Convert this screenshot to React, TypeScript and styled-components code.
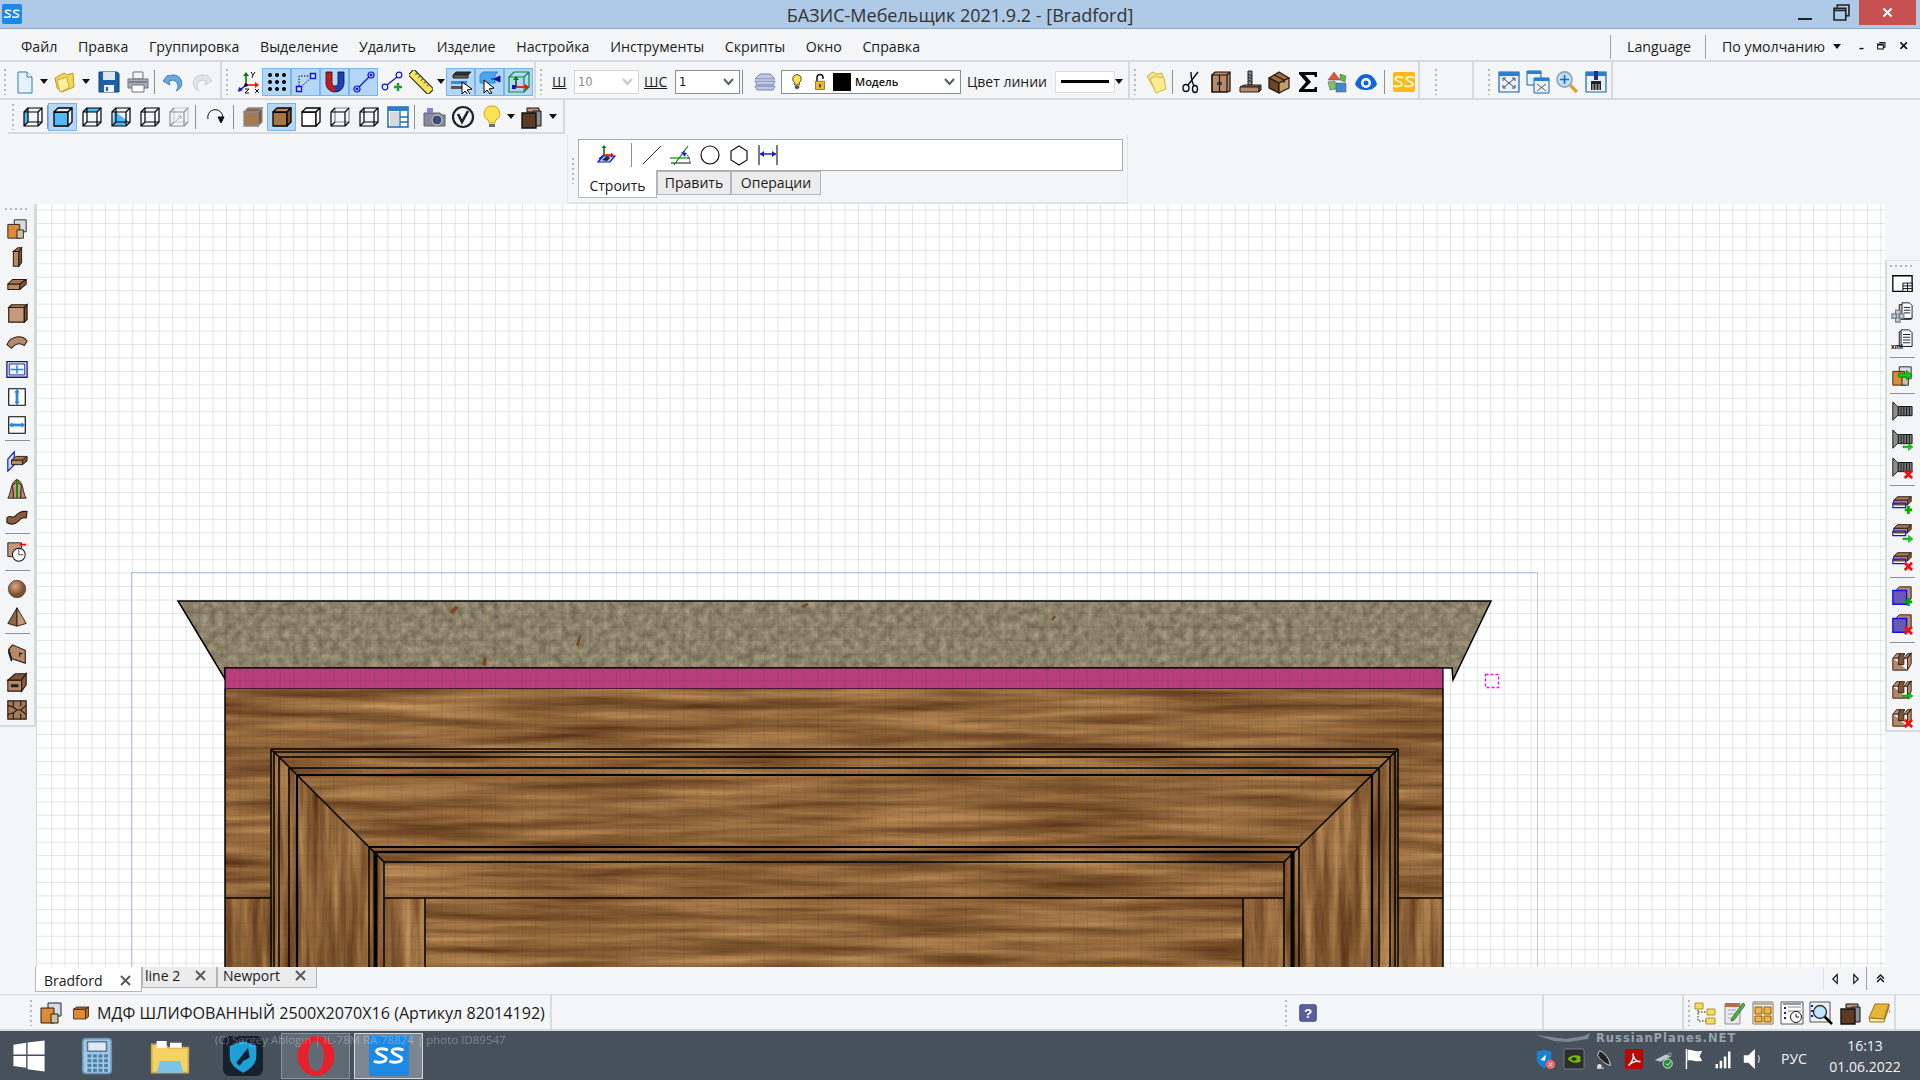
import React from "react";
import styled, { createGlobalStyle } from "styled-components";

const Global = createGlobalStyle`
  html, body { margin: 0; padding: 0; background: #f4f5f7; overflow: hidden; }
  #root { width: 1920px; height: 1080px; }
`;

const UI = `"Open Sans", "Noto Sans", sans-serif`;

const Page = styled.div`
  width: 1920px; height: 1080px; display: flex; flex-direction: column;
  background: #f4f5f7; font-family: ${UI}; color: #1b1b1b; position: relative; overflow: hidden;
`;

/* ---------- window title ---------- */
const TitleBar = styled.div`
  height: 28px; flex: none; background: #afcae6; border-bottom: 1px solid #8fa9c2;
  display: flex; align-items: flex-start; position: relative;
`;
const AppLogo = styled.div`
  width: 20px; height: 20px; margin: 4px 0 0 2px; border-radius: 2px; background: #1e88e5;
  display: flex; align-items: center; justify-content: center;
`;
const TitleText = styled.div`
  flex: 1; text-align: center; font-size: 18px; line-height: 30px; color: #333; margin-left: -22px;
`;
const WinButtons = styled.div`
  position: absolute; right: 4px; top: 0; display: flex; align-items: flex-start;
`;
const WinBtn = styled.div<{ $w: number; $close?: boolean }>`
  width: ${(p) => p.$w}px; height: 25px; display: flex; align-items: center; justify-content: center;
  background: ${(p) => (p.$close ? "#c75050" : "transparent")};
`;

/* ---------- menu ---------- */
const MenuBar = styled.div`
  height: 33px; flex: none; display: flex; align-items: center; border-bottom: 2px solid #d8dadd; box-sizing: border-box;
  padding: 4px 0 0 21px; font-size: 14.2px; position: relative;
`;
const MenuItem = styled.span`
  margin-right: 20.7px; white-space: nowrap; line-height: 20px;
`;
const MenuRight = styled.div`
  margin-left: auto; display: flex; align-items: center; height: 100%;
`;
const MenuSep = styled.div<{ $r: number }>`
  width: 1px; height: 24px; background: #9da1a6; margin-right: ${(p) => p.$r}px;
`;
const MenuRightItem = styled.span<{ $w: number }>`
  width: ${(p) => p.$w}px; white-space: nowrap;
`;
const SmallGlyph = styled.div<{ $w: number }>`
  width: ${(p) => p.$w}px; flex: none; display: flex; justify-content: center; align-items: center;
`;

/* ---------- toolbars ---------- */
const ToolRow = styled.div<{ $h: number }>`
  height: ${(p) => p.$h}px; flex: none; display: flex; align-items: stretch; box-sizing: border-box;
  border-bottom: 2px solid #d8dadd;
`;
const ToolRowPlain = styled(ToolRow)`
  border-bottom: none;
`;
const Bar = styled.div<{ $w: number; $ml?: number }>`
  width: ${(p) => p.$w}px; margin-left: ${(p) => p.$ml ?? 0}px; box-sizing: border-box; display: flex; align-items: center;
  border-right: 2px solid #d8dadd; flex: none; padding-top: 3px;
`;
const BarBoxed = styled(Bar)`
  border-bottom: 2px solid #d8dadd; padding-top: 1px;
`;
const Handle = styled.div<{ $w?: number }>`
  width: ${(p) => p.$w ?? 10}px; flex: none; align-self: stretch; display: flex; align-items: center; padding-left: 4px; box-sizing: border-box;
  &::before {
    content: ""; width: 2px; height: 26px;
    background: repeating-linear-gradient(to bottom, #b4b7bb 0 2px, transparent 2px 5px);
  }
`;
const Btn = styled.div<{ $on?: boolean; $w?: number }>`
  width: ${(p) => p.$w ?? 29}px; height: 28px; flex: none; display: flex; align-items: center; justify-content: center; box-sizing: border-box;
  ${(p) => (p.$on ? "background: #b5d7f7; border: 1px solid #7db4e8;" : "")}
`;
const Caret = styled.div<{ $w: number }>`
  width: ${(p) => p.$w}px; flex: none; display: flex; justify-content: center; align-items: center;
  &::before { content: ""; border-left: 4px solid transparent; border-right: 4px solid transparent; border-top: 5px solid #111; }
`;
const Sep = styled.div<{ $ml?: number; $mr?: number }>`
  width: 1px; height: 24px; flex: none; background: #8d9196; margin-left: ${(p) => p.$ml ?? 2}px; margin-right: ${(p) => p.$mr ?? 3}px;
`;
const FieldLabel = styled.span<{ $w: number; $ml?: number; $u?: boolean }>`
  width: ${(p) => p.$w}px; margin-left: ${(p) => p.$ml ?? 0}px; flex: none; font-size: 14px; white-space: nowrap;
  text-decoration: ${(p) => (p.$u ? "underline" : "none")};
`;
const Combo = styled.div<{ $w: number; $off?: boolean }>`
  width: ${(p) => p.$w}px; height: 24px; flex: none; box-sizing: border-box; background: #fff; display: flex; align-items: center; position: relative;
  border: 1px solid ${(p) => (p.$off ? "#d4d6d9" : "#8a8d91")};
  color: ${(p) => (p.$off ? "#8a8a8a" : "#111")}; font: 11.5px "DejaVu Sans", sans-serif; padding-left: 3px;
`;
const ComboChevron = styled.svg`
  position: absolute; right: 5px; top: 7px; width: 11px; height: 8px;
`;
const LayerName = styled.span`
  font: 600 11px ${UI}; margin-left: 4px;
`;
const Swatch = styled.div`
  width: 18px; height: 18px; background: #000; margin-left: 2px; flex: none;
`;
const ComboSlot = styled.div<{ $w: number }>`
  width: ${(p) => p.$w}px; flex: none; display: flex; justify-content: center;
`;
const LineBox = styled.div`
  width: 60px; height: 22px; flex: none; box-sizing: border-box; background: #fff; border: 1px solid #dcdee1; display: flex; align-items: center; justify-content: center;
  &::before { content: ""; width: 48px; height: 3px; background: #000; }
`;

/* ---------- floating panel ---------- */
const PanelRow = styled.div`
  height: 70px; flex: none; display: flex; padding: 1px 0 0 567px; box-sizing: border-box;
`;
const Panel = styled.div`
  width: 561px; height: 69px; box-sizing: border-box; display: flex; border-right: 1px solid #e0e2e5; border-bottom: 2px solid #e0e2e5; border-left: 1px solid #e8e9eb; padding-top: 4px;
`;
const PanelBody = styled.div`
  display: flex; flex-direction: column; width: 545px; margin-left: 0;
`;
const PanelStrip = styled.div`
  height: 32px; box-sizing: border-box; background: #fff; border: 1px solid #a6a9ad; display: flex; align-items: center; padding-left: 10px; flex: none;
`;
const PanelTabs = styled.div`
  display: flex; align-items: flex-start;
`;
const PanelTab = styled.div<{ $w: number; $on?: boolean }>`
  width: ${(p) => p.$w}px; box-sizing: border-box; font-size: 14px; text-align: center; flex: none;
  height: ${(p) => (p.$on ? 28 : 24)}px; line-height: ${(p) => (p.$on ? 31 : 22)}px; margin-top: ${(p) => (p.$on ? -1 : 0)}px;
  background: ${(p) => (p.$on ? "#fff" : "#ececec")};
  border: 1px solid #b3b6ba; border-top: ${(p) => (p.$on ? "none" : "1px solid #b3b6ba")};
`;

/* ---------- workspace ---------- */
const Workspace = styled.div`
  height: 763px; flex: none; display: flex; align-items: stretch; margin-top: 0;
`;
const SideColumn = styled.div<{ $w: number; $pt: number; $h: number; $right?: boolean }>`
  width: ${(p) => p.$w}px; flex: none; box-sizing: border-box; padding-top: ${(p) => p.$pt}px;
  & > div {
    height: ${(p) => p.$h}px; box-sizing: border-box; display: flex; flex-direction: column; align-items: center;
    ${(p) => (p.$right ? "border-left: 2px solid #d8dadd; border-bottom: 2px solid #d8dadd; border-top: 1px solid #e3e5e8; padding-right: 3px;" : "border-right: 2px solid #d8dadd; border-bottom: 2px solid #d8dadd;")}
  }
`;
const SideBar = styled.div``;
const SideHandle = styled.div`
  width: 24px; height: 2px; flex: none; margin-top: 4px;
  background: repeating-linear-gradient(to right, #b4b7bb 0 2px, transparent 2px 5px);
`;
const SideBtn = styled.div`
  width: 30px; height: 28px; flex: none; display: flex; align-items: center; justify-content: center;
`;
const SideSep = styled.div<{ $m: number; $b: number }>`
  width: 25px; height: 1px; flex: none; background: #8d9196; margin-top: ${(p) => p.$m}px; margin-bottom: ${(p) => p.$b}px;
`;
const Gap = styled.div<{ $h: number }>`
  height: ${(p) => p.$h}px; flex: none;
`;
const Canvas = styled.div`
  flex: 1; min-width: 0; background: #fff; border-left: 1px solid #d4d7db; overflow: hidden;
  & > svg { display: block; }
`;

/* ---------- document tabs ---------- */
const TabsRow = styled.div`
  height: 27px; flex: none; display: flex; align-items: flex-start; padding-left: 35px;
`;
const DocTab = styled.div<{ $w: number; $on?: boolean; $pl: number }>`
  width: ${(p) => p.$w}px; height: ${(p) => (p.$on ? 25 : 21)}px; flex: none; box-sizing: border-box; display: flex; align-items: center; justify-content: space-between;
  padding: ${(p) => (p.$on ? 2 : 0)}px 10px ${(p) => (p.$on ? 0 : 3)}px ${(p) => p.$pl}px; font-size: 14px;
  background: ${(p) => (p.$on ? "#fff" : "#ececec")}; border: 1px solid #b3b6ba; border-top: none;
`;
const TabsRight = styled.div`
  margin-left: auto; display: flex; align-items: center; height: 23px; width: 64px; box-sizing: border-box; border-left: 1px solid #dfe1e4; margin-right: 33px;
`;
const TabsVSep = styled.div`
  width: 1px; height: 23px; background: #9da1a6; margin: 0 6px 0 0;
`;

/* ---------- status bar ---------- */
const StatusRow = styled.div`
  height: 37px; flex: none; display: flex; align-items: stretch; box-sizing: border-box; border-top: 1px solid #d8dadd; border-bottom: 2px solid #d8dadd;
`;
const StatusBar = styled.div<{ $w: number; $ml?: number }>`
  width: ${(p) => p.$w}px; margin-left: ${(p) => p.$ml ?? 0}px; flex: none; box-sizing: border-box; display: flex; align-items: center; border-right: 2px solid #d8dadd; padding-top: 2px;
`;
const StatusText = styled.span`
  font-size: 16.1px; white-space: nowrap;
`;

/* ---------- taskbar ---------- */
const Taskbar = styled.div`
  flex: 1; background: #47515c; display: flex; align-items: center; position: relative; color: #fff;
`;
const TaskSlot = styled.div<{ $w: number; $mr?: number; $state?: "open" | "active" }>`
  width: ${(p) => p.$w}px; height: 46px; margin-right: ${(p) => p.$mr ?? 4}px; flex: none; box-sizing: border-box; display: flex; align-items: center; justify-content: center;
  ${(p) => (p.$state === "open" ? "background: #5f6a75; border: 1px solid #8a939c;" : "")}
  ${(p) => (p.$state === "active" ? "background: #7d868f; border: 1px solid #d5d9dd;" : "")}
`;
const Tray = styled.div`
  margin-left: auto; display: flex; align-items: center; height: 100%; padding-top: 6px; box-sizing: border-box;
`;
const TraySlot = styled.div`
  width: 29.8px; flex: none; display: flex; justify-content: center;
`;
const Lang = styled.div`
  width: 52px; text-align: center; font-size: 14px; color: #f2f2f2;
`;
const Clock = styled.div`
  width: 100px; padding-right: 10px; box-sizing: border-box; text-align: center; font-size: 14px; line-height: 21px; color: #f2f2f2; margin-top: -6px;
`;
const Watermark = styled.div<{ $x: number; $op: number }>`
  position: absolute; left: ${(p) => p.$x}px; top: 1px; font: 11.5px ${UI}; white-space: nowrap; color: #fff; opacity: ${(p) => p.$op};
`;
const PlaneMark = styled.div`
  position: absolute; left: 1536px; top: 0; display: flex; align-items: center; gap: 4px;
  font: bold 11.5px "DejaVu Sans", sans-serif; letter-spacing: 1px; color: #98a2ab; white-space: nowrap;
`;
const PlaneShape = styled.svg`
  width: 56px; height: 14px; display: block; flex: none;
`;

/* ---------- icons ---------- */
const Glyph = styled.svg<{ $s?: number }>`
  width: ${(p) => p.$s ?? 24}px; height: ${(p) => p.$s ?? 24}px; display: block; flex: none;
`;
const W = "#b58a6c";
const plus = <path d="M19 14v9M15 18.500h8" stroke="#0a0" strokeWidth="3" fill="none" />;
const arrowG = <path d="M13 18.500h6v-3l5 4-5 4v-3h-6z" fill="#1c1" stroke="#080" strokeWidth=".5" />;
const crossR = <path d="M15 15l8 8M23 15l-8 8" stroke="#e11" strokeWidth="3" fill="none" />;
const cube = (f: string, t: string, s: string) => (
  <g stroke="#000" strokeWidth="1.300" strokeLinejoin="round">
    <path d="M3 7h14v14H3z" fill={f} />
    <path d="M3 7l4-4h14l-4 4z" fill={t} />
    <path d="M17 7l4-4v14l-4 4z" fill={s} />
  </g>
);
const wire = (x: string) => (
  <g stroke="#000" strokeWidth="1.200" fill="none">
    <path d="M7 3h14v14H7z" stroke={x} />
    <path d="M3 7h14v14H3zM3 7l4-4M17 7l4-4M17 21l4-4M3 21l4-4" />
  </g>
);
const shelf = (
  <g stroke="#2a1a10" strokeWidth="1.100" strokeLinejoin="round">
    <path d="M2 11h13v6H2z" fill={W} />
    <path d="M2 11l5-5h15l-7 5z" fill="#a37657" />
    <path d="M15 11l7-5v5l-7 6z" fill="#7d5638" />
  </g>
);
const screwG = (
  <g stroke="#111" strokeWidth="1">
    <path d="M2 1l6 6v8l-6 6z" fill="#8d8d8d" />
    <path d="M8 6h15v10H8z" fill="#777" />
    <path d="M11 6v10M14 6v10M17 6v10M20 6v10" />
  </g>
);
const plateB = (
  <g strokeLinejoin="round">
    <path d="M7 4h15l-4 4H3z" fill="#a37657" stroke="#2a1a10" />
    <path d="M3 8h15v5H3z" fill={W} stroke="#2a1a10" />
    <path d="M18 8l4-4v5l-4 4z" fill="#7d5638" stroke="#2a1a10" />
    <path d="M2 11h14v5H2z" fill="none" stroke="#11d" strokeWidth="1.300" />
  </g>
);
const blueBox = (
  <g>
    <path d="M6 5l3-3h13v13l-3 3z" fill={W} stroke="#2a1a10" />
    <path d="M2 6h15v15H2z" fill="#6a58b5" stroke="#11e" strokeWidth="1.500" />
  </g>
);
const groove = (
  <g stroke="#2a1a10" strokeLinejoin="round">
    <path d="M2 9v13h16V8l4-5v12l-4 7M2 9l4-5h4l-2 5zM14 9l4-5h4l-4 5z" fill={W} />
    <path d="M8 9v7h6V9l-1-1 2-4h-5z" fill="#7d5638" />
  </g>
);
const matGroup = (
  <g stroke="#222">
    <path d="M9 2h13v13H9z" fill="#d7dbe8" />
    <path d="M2 7h13v15H2z" fill="#e08a35" />
    <path d="M12 13h7v9h-7z" fill="#c9c3a0" />
  </g>
);
const materials = (
  <g stroke="#111">
    <path d="M8 3h12v4H8z" fill="#bd9a7c" />
    <path d="M14 6h8v15h-8z" fill="#8b9096" />
    <path d="M3 8h14v15H3z" fill="#5d3a22" strokeWidth="1.400" />
  </g>
);
const bulb = (
  <g>
    <path d="M12 1a7.500 7.500 0 0 0-4 14c1 1 1 3 1 3h6s0-2 1-3a7.500 7.500 0 0 0-4-14z" fill="#ffe254" stroke="#c9a51f" />
    <path d="M9 19h6v3H9z" fill="#6a7078" />
  </g>
);
const brandSwoosh = (c: string) => (
  <g fill="none" stroke={c} strokeWidth="2" strokeLinecap="round">
    <path d="M10.500 7.500C6 6 2 7.500 3.500 9.500S10 12 10 14s-4 3-8 2" />
    <path d="M21.500 7.500C17 6 13 7.500 14.500 9.500S21 12 21 14s-4 3-8 2" />
  </g>
);
const winFrame = (inner: React.ReactNode) => (
  <g>
    <path d="M2 2h20v20H2z" fill="#eaf3fc" stroke="#1565b5" strokeWidth="1.200" />
    <path d="M2 2h20v4H2z" fill="#2a7dd0" />
    {inner}
  </g>
);

const icons: Record<string, React.ReactNode> = {
  doc: <g><path d="M5 2h9l5 5v16H5z" fill="#e6f2fb" stroke="#2f7fb8" /><path d="M14 2v5h5" fill="#fff" stroke="#2f7fb8" /></g>,
  folder: <g><path d="M3 8l9-5 3 2 6-2 1 14-12 5-5-4z" fill="#f6d84f" stroke="#b99a30" /><path d="M5 10l10-3 2 11-9 4z" fill="#fdeea0" stroke="#c9aa3d" /></g>,
  save: <g><path d="M2 2h18l2 2v18H2z" fill="#1f5fa8" stroke="#123e70" /><path d="M6 2h12v8H6z" fill="#dce7f2" /><path d="M7 15h10v7H7z" fill="#eef2f6" /><path d="M9 17h2v4H9z" fill="#1f5fa8" /></g>,
  print: <g stroke="#6d747c"><path d="M7 2h10v7H7z" fill="#f2f3f5" /><path d="M2 9h20v9H2z" fill="#a9afb6" /><path d="M6 15h12v7H6z" fill="#fff" /><path d="M3 12h18" stroke="#555" /></g>,
  undo: <g><path d="M7 5l-5 6 7 4-1-4c5-2 8 0 9 5 0 2-1 4-2 5 5-2 7-7 5-11-2-5-8-6-12-4z" fill="#6aa7dc" stroke="#3e7fb9" /></g>,
  redo: <g transform="matrix(-1 0 0 1 24 0)"><path d="M7 5l-5 6 7 4-1-4c5-2 8 0 9 5 0 2-1 4-2 5 5-2 7-7 5-11-2-5-8-6-12-4z" fill="#e2e4e6" stroke="#c9cccf" /></g>,
  axes: <g fill="none" strokeWidth="1.600"><path d="M10 15V4" stroke="#0a7a0a" /><path d="M10 2l-3 4h6z" fill="#0a7a0a" stroke="none" /><path d="M10 15h10" stroke="#e11" /><path d="M23 15l-4-3v6z" fill="#e11" stroke="none" /><path d="M10 15l-6 5" stroke="#11d" /><path d="M2 22l1-5 4 3z" fill="#11d" stroke="none" /><circle cx="10" cy="15" r="1.800" fill="#000" stroke="none" /><path d="M15 2l2 3 2-3M17 5l-1 3M9 19h4l-4 4h4M19 19l4 4M23 19l-4 4" stroke="#111" strokeWidth="1" /></g>,
  dots: <g fill="#000">{[5, 12, 19].flatMap((y) => [5, 12, 19].map((x) => <circle key={`${x}${y}`} cx={x} cy={y} r="2" />))}</g>,
  snap: <g fill="none"><path d="M5 19V6h14" stroke="#000" strokeDasharray="1.500 1.500" /><path d="M5 19L19 6" stroke="#000" strokeDasharray="1.500 1.500" /><path d="M2.500 16.500h5v5h-5zM16.500 3.500h5v5h-5z" stroke="#11d" strokeWidth="1.400" fill="#cfe4fa" /></g>,
  magnet: <g fill="none" strokeWidth="6"><path d="M6 2v11c0 4 3 6 6 6" stroke="#c81a1a" /><path d="M18 2v11c0 4-3 6-6 6" stroke="#1b3fbd" /><path d="M3 2v11c0 5 4 9 9 9s9-4 9-9V2h-6v11c0 2-1 3-3 3s-3-1-3-3V2z" stroke="#111" strokeWidth=".8" /></g>,
  ptline: <g fill="none" stroke="#11d" strokeWidth="1.200"><circle cx="5" cy="19" r="3" /><circle cx="19" cy="5" r="3" /><circle cx="5" cy="19" r=".8" /><circle cx="19" cy="5" r=".8" /><path d="M7 17L17 7" /></g>,
  ptlineadd: <g fill="none" stroke="#11d" strokeWidth="1.200"><circle cx="4" cy="17" r="2.800" /><circle cx="18" cy="5" r="2.800" /><path d="M6 15L16 7" /><path d="M17 13v8M13 17h8" stroke="#1a9a4a" strokeWidth="2.500" /></g>,
  ruler: <g transform="rotate(45 12 12)"><path d="M-2 8h28v8H-2z" fill="#f2e55c" stroke="#111" /><path d="M3 8v3M7 8v3M11 8v3M15 8v3M19 8v3" stroke="#555" /></g>,
  layerCursor: <g><path d="M4 5l3-3h15l-3 3z" fill="#333" stroke="#222" /><path d="M4 5h15v3H4z" fill="#666" stroke="#222" /><path d="M2 11h16v3H2z" fill="#2f8ee8" /><path d="M2 16h12v3H2z" fill="#555" /><path d="M13 12l10 7-5 1 3 4-2 1-3-4-3 3z" fill="#fff" stroke="#000" /></g>,
  blueCursor: <g><path d="M2 5l3-3h15l-3 3v8H2z" fill="#4aa6ee" stroke="#2a87d8" /><path d="M22 6l-6 3 6 3zM13 9h3" stroke="#11a" fill="#11a" /><path d="M6 10l10 8-5 1 3 4-2 1-3-4-3 3z" fill="#fff" stroke="#000" /></g>,
  greenBox: <g fill="none" stroke="#0a8a3a" strokeWidth="1.200"><path d="M2 7h15v15H2zM2 7l5-5h15v15l-5 5M17 7l5-5" /><path d="M9 17V9" stroke="#0a7a0a" strokeWidth="1.800" /><path d="M9 6l-3 4h6z" fill="#0a7a0a" stroke="none" /><path d="M9 17h9" stroke="#e11" strokeWidth="1.800" /><path d="M22 17l-4-3v6z" fill="#e11" stroke="none" /><path d="M5 15h4v4H5z" fill="#11d" stroke="none" /></g>,
  cLeft: <g><path d="M3 7l4-4v14l-4 4z" fill="#4fbaf7" />{wire("#000")}</g>,
  cFront: cube("#4fbaf7", "#e6f3fc", "#e6f3fc"),
  cTop: <g><path d="M3 7l4-4h14l-4 4z" fill="#4fbaf7" />{wire("#000")}</g>,
  cDiag: <g><path d="M5 6L19 16l-4 5H4z" fill="#4fbaf7" />{wire("#000")}</g>,
  cWire: wire("#000"),
  cGrey: <g opacity=".4">{wire("#888")}<path d="M8 17l6-6M11 11h3v3" stroke="#444" fill="none" /></g>,
  rotate: <g fill="none" stroke="#111" strokeWidth="1"><path d="M5 14a7.500 7.500 0 1 1 13 3" /><path d="M15 12h6l-3 6z" fill="#111" /></g>,
  woodGrey: <g stroke="#8a8a8a" strokeWidth="1.300"><path d="M3 7h14v14H3z" fill="#a8794f" /><path d="M3 7l4-4h14l-4 4z" fill="#8d6846" /><path d="M17 7l4-4v14l-4 4z" fill="#7d5a3b" /></g>,
  wood: cube("#a8743f", "#b98a55", "#7d5228"),
  cWhite: cube("#fff", "#fff", "#fff"),
  cGW: wire("#888"),
  viewPanel: <g><path d="M2 2h20v20H2z" fill="#fff" stroke="#1a6ab5" strokeWidth="1.500" /><path d="M2 2h20v4H2z" fill="#2a7dd0" /><path d="M4 7h9v14H4z" fill="#d5d9dd" /><path d="M14 6v16M14 12h8M14 17h8" stroke="#1a6ab5" strokeWidth="1.300" /></g>,
  camera: <g><path d="M2 8h16l2 2 3 0v11H2z" fill="#868a9a" stroke="#5d6070" /><circle cx="15" cy="15" r="5" fill="#444a58" stroke="#ddd" /><circle cx="15" cy="15" r="2" fill="#3a48c8" /><path d="M5 3h6v5H5z" fill="#8d7fd6" /></g>,
  vray: <g fill="none" stroke="#222" strokeWidth="2.200"><circle cx="12" cy="12" r="10" /><path d="M7 9l4 8 6-11" strokeWidth="2.600" /></g>,
  bulb,
  materials,
  plane: <g><path d="M6 19l5-6h12l-5 6z" fill="#b4cef5" stroke="#11d" strokeWidth="1.200" /><path d="M12 12V4" stroke="#0a7a0a" strokeWidth="1.600" /><path d="M12 2l-2.500 3h5z" fill="#0a7a0a" /><path d="M12 12h7" stroke="#e11" strokeWidth="1.600" /><path d="M22 12l-3-2.500v5z" fill="#e11" /><path d="M12 12l-5 4" stroke="#11d" strokeWidth="1.600" /><path d="M10 17l5-4 3 2-3 3z" fill="#222" /></g>,
  line: <path d="M3 21L21 3" stroke="#111" fill="none" strokeWidth=".9" />,
  angle: <g fill="none"><path d="M2 20h20" stroke="#111" /><path d="M1 15h20" stroke="#0a8a0a" strokeWidth="1.200" /><path d="M5 22L19 3" stroke="#0a8a0a" strokeWidth="1.200" /><path d="M14 8c4 2 6 6 7 11" stroke="#11d" strokeDasharray="2 1" /><path d="M12 9l5 1-1 4z" fill="#11d" /></g>,
  circle: <circle cx="12" cy="12" r="9" fill="none" stroke="#111" strokeWidth="1.200" />,
  hex: <path d="M12 3l8 5v9l-8 5-8-5V8z" fill="none" stroke="#111" strokeWidth="1.200" />,
  dim: <g fill="none" stroke="#111" strokeWidth="1.100"><path d="M3 2v20M21 2v20" /><path d="M4 11h16" stroke="#11d" strokeWidth="1.400" /><path d="M4 11l4-3v6zM20 11l-4-3v6z" fill="#11d" stroke="none" /></g>,
  layers: <g fill="#bfc6e2" stroke="#7b83b5"><path d="M7 4h10l5 5H2z" /><path d="M2 11h20l-2 4H4z" /><path d="M2 16h20l-2 4H4z" /></g>,
  bulbS: <g><path d="M12 2a6 6 0 0 0-3 11v3h6v-3a6 6 0 0 0-3-11z" fill="#fde34f" stroke="#111" /><path d="M9 17h6v3l-3 2-3-2z" fill="#555" /></g>,
  lock: <g><path d="M8 12V6a4 4 0 0 1 8 0v2" fill="none" stroke="#111" strokeWidth="2" /><path d="M6 11h12v11H6z" fill="#f0b733" stroke="#8a5c10" /><path d="M11 15h2v4h-2z" fill="#111" /></g>,
  folders: <g><path d="M3 6l6-4 4 2 5-1 3 13-9 6z" fill="#f4e08a" stroke="#cfb54e" /><path d="M6 9l6-3 3 1 5 1 2 11-10 4z" fill="#fdec8e" stroke="#d6b63a" /></g>,
  scissors: <g fill="none" stroke="#111" strokeWidth="1.400"><path d="M18 2L8 15M11 2c0 6 1 10 3 14" /><ellipse cx="6" cy="18" rx="3" ry="3.500" /><ellipse cx="15" cy="19" rx="2.500" ry="3.500" /></g>,
  wardrobe: <g stroke="#1a120c" strokeWidth="1.200"><path d="M3 5l3-3h15v19l-3 1H3z" fill="#b58a6c" /><path d="M3 5h15v17H3zM18 5l3-3M10.500 5v17" fill="none" /><path d="M9 12v3M12 12v3" /></g>,
  screwUp: <g stroke="#222"><path d="M10 1h4v14h-4z" fill="#8d8d8d" /><path d="M10 4l4 2M10 7l4 2M10 10l4 2" /><path d="M2 17l4-2h17l-2 2z" fill="#a37657" /><path d="M2 17h19v5H2z" fill={W} /><path d="M21 17l2-2v5l-2 2z" fill="#7d5638" /></g>,
  box: <g stroke="#22150b" strokeWidth="1.200" strokeLinejoin="round"><path d="M2 8l10-6 10 6-10 5z" fill="#a06c3f" /><path d="M2 8v10l10 5V13z" fill="#6b4626" /><path d="M22 8v10l-10 5V13z" fill="#c49a6c" /><path d="M7 5l10 5v3" fill="none" /></g>,
  sigma: <path d="M3 2h18v5h-2l-1-2H9l6 7-7 7h10l1-2h2v5H3v-2l7-8-7-8z" fill="#000" />,
  recycle: <g stroke="#555" strokeWidth=".5"><path d="M9 2l6 8H3z" fill="#e55039" /><path d="M15 4l6 2-1 6-5-2z" fill="#5dbb46" /><path d="M3 12l7-1 1 8-6 1z" fill="#7fc06a" /><path d="M11 13h10v9H11z" fill="#3f8ccb" /></g>,
  eye: <g><path d="M1 14c2-6 6-10 11-10s9 4 11 10c-2 5-7 6-11 6s-9-1-11-6z" fill="#1265d6" /><circle cx="12" cy="13" r="5" fill="#fff" /><circle cx="12" cy="13" r="2.500" fill="#1265d6" /></g>,
  yLogo: <g><rect x="1" y="2" width="22" height="20" rx="2" fill="#fcb814" />{brandSwoosh("#fff3c8")}</g>,
  zoomFit: winFrame(<path d="M7 9l10 8M17 9L7 17M6 8h3M6 8v3M18 8h-3M18 8v3M6 18h3M6 18v-3M18 18h-3M18 18v-3" stroke="#333" fill="none" strokeWidth=".9" />),
  zoomAll: <g><path d="M1 1h14v14H1z" fill="#eaf3fc" stroke="#1565b5" /><path d="M1 1h14v3H1z" fill="#2a7dd0" /><path d="M8 8h15v15H8z" fill="#eaf3fc" stroke="#1565b5" /><path d="M8 8h15v3H8z" fill="#2a7dd0" /><path d="M11 14l9 7M20 14l-9 7" stroke="#333" strokeWidth=".8" /></g>,
  magnify: <g><path d="M14 14l8 8" stroke="#d9a441" strokeWidth="3.500" /><circle cx="9.500" cy="9.500" r="7.500" fill="#bfe3fb" stroke="#9aa7b3" strokeWidth="1.800" /><path d="M9.500 5v9M5 9.500h9" stroke="#1265d6" strokeWidth="1.600" /></g>,
  brush: winFrame(<g><path d="M10 1h4v9h-4z" fill="#1a2f9a" /><path d="M7 11h10v9H7z" fill="#222" /><path d="M9 14v6M12 14v6M15 14v6" stroke="#ddd" /></g>),
  matGroup,
  boardTall: <g stroke="#2a1a10" strokeWidth="1.100"><path d="M8 6h6v16H8z" fill={W} /><path d="M8 6l5-4h4l-3 4z" fill="#a37657" /><path d="M14 6l3-4v16l-3 4z" fill="#7d5638" /></g>,
  boardFlat: shelf,
  boardFront: <g stroke="#2a1a10" strokeWidth="1.300"><path d="M3 6h17v16H3z" fill="#c49a7a" /><path d="M3 6l3-3h17l-3 3z" fill="#a37657" /><path d="M20 6l3-3v16l-3 3z" fill="#7d5638" /></g>,
  curved: <path d="M1 16c4-10 17-11 22-4l-3 5c-4-3-9-3-14 3z" fill={W} stroke="#2a1a10" strokeWidth="1.100" />,
  frameH: <g fill="none"><path d="M1 4h22v17H1z" stroke="#10108a" strokeWidth="1.400" /><path d="M3.500 6.500h17v12h-17z" stroke="#10108a" fill="#eef6fd" /><path d="M5 12.500h14M12 8v9" stroke="#2a86e0" strokeWidth="1.600" /></g>,
  arrowsV: <g fill="none"><path d="M3 3h18v18H3z" stroke="#000" strokeWidth="1.200" fill="#fff" /><path d="M12 6v12" stroke="#2a86e0" strokeWidth="3" /><path d="M12 3l-3 4h6zM12 21l-3-4h6z" fill="#2a86e0" /></g>,
  arrowsH: <g fill="none"><path d="M3 3h18v18H3z" stroke="#000" strokeWidth="1.200" fill="#fff" /><path d="M6 12h12" stroke="#2a86e0" strokeWidth="3" /><path d="M3 12l4-3v6zM21 12l-4-3v6z" fill="#2a86e0" /></g>,
  planeBoard: <g><path d="M2 10L9 2v14l-7 7z" fill="#cfe0fa" stroke="#11d" strokeWidth="1.300" /><path d="M6 11h12v5H6z" fill={W} stroke="#2a1a10" /><path d="M6 11l5-4h12l-5 4z" fill="#a37657" stroke="#2a1a10" /><path d="M18 11l5-4v5l-5 4z" fill="#7d5638" stroke="#2a1a10" /></g>,
  arch: <g><path d="M2 22c4-6 3-19 10-20 7 1 6 14 10 20h-6V12l-4-2-4 2v10z" fill={W} stroke="#2a1a10" /><path d="M7 8c1 5 1 10 1 14h8c0-4 0-9 1-14l-5-4z" fill="#c49a7a" stroke="#2a1a10" /><path d="M12 1v21" stroke="#0a8a0a" strokeWidth="2" /></g>,
  wave: <path d="M1 13c3-4 6 1 9-2s6-6 13-5l-1 7c-5-1-6 1-9 4s-8 4-12 1z" fill="#8a5c3f" stroke="#2a1a10" strokeWidth="1.200" />,
  roundBoard: <g><path d="M2 2h15v15H2z" fill="#c49a7a" stroke="#222" /><circle cx="14" cy="15" r="7" fill="#fff" stroke="#111" strokeWidth="1.100" /><path d="M14 15V8M14 15h5" stroke="#111" strokeWidth=".8" /><path d="M15 4h7" stroke="#e11" strokeWidth="2" /></g>,
  sphere: <g><defs><radialGradient id="sph" cx="40%" cy="35%"><stop offset="0" stopColor="#dba883" /><stop offset="1" stopColor="#7b4f2b" /></radialGradient></defs><circle cx="12" cy="12" r="9.500" fill="url(#sph)" stroke="#555" /></g>,
  pyramid: <g stroke="#2a1a10"><path d="M12 2L2 19l10 3z" fill="#8f6546" /><path d="M12 2l10 17-10 3z" fill="#c49a7a" /></g>,
  door: <g stroke="#2a1a10" strokeWidth="1.200"><path d="M3 7l4-5 14 6v14L6 17z" fill={W} /><path d="M3 7l3 10v3l-3-9z" fill="#7d5638" /><path d="M18 12l-3-1v4" fill="none" /></g>,
  drawer: <g stroke="#2a1a10" strokeWidth="1.200"><path d="M2 10h15v12H2z" fill={W} /><path d="M2 10l8-7h12l-5 7z" fill="#7d5638" /><path d="M17 10l5-7v12l-5 7z" fill="#8a5c3f" /><path d="M6 15h7v2H6z" fill="#222" /></g>,
  partition: <g stroke="#2a1a10" strokeWidth="1.300"><path d="M2 2h20v20H2z" fill="#a67a58" /><path d="M2 7l6 2 4 3-4 3-6 2M12 12h4l6-5M16 12l6 5M8 2v7M8 15v7M16 2v6M16 16v6" fill="none" /></g>,
  sheet: <g><path d="M2 3h21v17H2z" fill="#fff" stroke="#000" strokeWidth="1.400" /><path d="M13 11h10v9H13z" fill="#fff" stroke="#000" /><path d="M13 14h10M13 17h10M18 11v9" stroke="#000" /></g>,
  docsNet: <g><path d="M9 4h9l4 4v12H9z" fill="#ccc" stroke="#111" /><path d="M12 2h8l3 3v14H12z" fill="#fff" stroke="#111" /><path d="M14 7h7M14 10h7M14 13h7" stroke="#111" /><path d="M5 10h5v5H5zM1 14h5v5H1zM9 14h5v5H9zM5 18h5v5H5z" fill="#c5ccd4" stroke="#77808a" strokeWidth="1.300" /></g>,
  xmlDoc: <g><path d="M9 3h9l4 4v12H9z" fill="#ddd" stroke="#111" /><path d="M11 1h9l3 3v15H11z" fill="#fff" stroke="#111" /><path d="M13 6h8M13 9h8M13 12h8M13 15h8" stroke="#111" /><text x="0" y="22" fontFamily="Liberation Sans" fontSize="7.500" fontWeight="bold">xml</text></g>,
  matArrow: <g>{matGroup}<path d="M8 9h9V6l6 5-6 5v-3H8z" fill="#1c1" stroke="#080" /></g>,
  screw: screwG, screwAdd: <g>{screwG}{arrowG}</g>, screwDel: <g>{screwG}{crossR}</g>,
  plateAdd: <g>{plateB}{plus}</g>, plateTo: <g>{plateB}{arrowG}</g>, plateDel: <g>{plateB}{crossR}</g>,
  bluePlus: <g>{blueBox}{plus}</g>, blueDel: <g>{blueBox}{crossR}</g>,
  groove, grooveTo: <g>{groove}{arrowG}</g>, grooveDel: <g>{groove}{crossR}</g>,
  orange: <g stroke="#2a1a10"><path d="M2 7h16v13H2z" fill="#e08a35" /><path d="M2 7l4-3h16l-4 3zM18 7l4-3v13l-4 3z" fill="#b86d25" /></g>,
  help: <g><rect x="2" y="2" width="20" height="20" rx="2" fill="#5a5f9c" stroke="#40447c" /><text x="12" y="18" textAnchor="middle" fontFamily="Liberation Sans" fontWeight="bold" fontSize="16" fill="#fff">?</text></g>,
  tree: <g><path d="M2 2h8v6H2zM14 8h8v6h-8zM13 17h9v6h-9z" fill="#f4dc5c" stroke="#b1952e" /><path d="M5 9v11h8M5 11h9" stroke="#222" strokeDasharray="1.500 1.500" fill="none" /></g>,
  notepad: <g><path d="M3 3h15v20H3z" fill="#e8e8ee" stroke="#8f8f9f" /><path d="M3 2h15v4H3z" fill="#b56a55" /><path d="M6 9h8M6 13h8M6 17h6" stroke="#aaa" /><path d="M10 17L21 2l2 2-11 15-3 1z" fill="#4fb34a" stroke="#2c7c2a" /></g>,
  orangeGrid: <g><path d="M2 1h20v22H2z" fill="#f2efe2" stroke="#8f7b4f" /><path d="M2 1h20v3H2z" fill="#b0b0b0" /><path d="M4 6h7v7H4zM13 6h7v7h-7zM4 15h7v6H4zM13 15h7v6h-7z" fill="#f2b440" stroke="#8a5c10" /></g>,
  listClock: <g><path d="M1 1h22v22H1z" fill="#fff" stroke="#555" /><path d="M3 3h18" stroke="#333" /><path d="M5 6v14" stroke="#11d" strokeDasharray="2 3" strokeWidth="2" /><path d="M8 6h13M8 10h13" stroke="#888" /><circle cx="16" cy="16" r="5.500" fill="#fff" stroke="#111" /><path d="M16 13v3h3" fill="none" stroke="#111" /></g>,
  zoomDoc: <g><path d="M1 1h20v20H1z" fill="#eef3f8" stroke="#555" /><path d="M3 4v15" stroke="#11d" strokeDasharray="2 3" strokeWidth="2" /><path d="M15 15l8 8" stroke="#000" strokeWidth="2.500" /><circle cx="11" cy="11" r="6.500" fill="#bfe3fb" stroke="#333" strokeWidth="1.400" /></g>,
  book: <g><path d="M2 17L8 3h14l-5 15z" fill="#e6b53a" stroke="#9a7615" /><path d="M2 17l1 4h14l5-15v-3l-5 15z" fill="#f4e9b0" stroke="#9a7615" /><path d="M22 9l1 1-1 3z" fill="#d33" /></g>,
};

const Ico = ({ n, s }: { n: string; s?: number }) => (
  <Glyph $s={s} viewBox="0 0 24 24" aria-hidden="true">{icons[n]}</Glyph>
);
const B = ({ n, on, w, s }: { n: string; on?: boolean; w?: number; s?: number }) => (
  <Btn $on={on} $w={w}><Ico n={n} s={s} /></Btn>
);
const Chevron = ({ c = "#5a5d60" }: { c?: string }) => (
  <ComboChevron viewBox="0 0 11 8"><path d="M1 1l4.500 5L10 1" fill="none" stroke={c} strokeWidth="2" /></ComboChevron>
);

/* ---------- drawing ---------- */
const CW = 1849, CH = 763;
const gridPath = (() => {
  let d = "";
  for (let x = 50.6; x < 36 + CW; x += 13.45) d += `M${x.toFixed(2)} 204V967`;
  for (let y = 210; y < 967; y += 13.45) d += `M36 ${y.toFixed(2)}H1885`;
  return d;
})();
const slabPts = "177,601 1490,601 1452,680 1451,668 224,668 224,679";
const V = (id: string) => <g clipPath={`url(#${id})`}><rect x="36" y="700" width="1849" height="268" filter="url(#woodV)" /></g>;
const verticalZones: [string, string][] = [
  ["v1", "224,898 270,898 270,967 224,967"],
  ["v2", "1397,898 1442,898 1442,967 1397,967"],
  ["v3", "270,749 296,775 296,967 270,967"],
  ["v4", "1397,749 1371,775 1371,967 1397,967"],
  ["v5", "296,775 368,847 368,967 296,967"],
  ["v6", "1371,775 1298,847 1298,967 1371,967"],
  ["v7", "368,847 383,862 383,967 368,967"],
  ["v8", "1298,847 1283,862 1283,967 1298,967"],
  ["v9", "383,898 424,898 424,967 383,967"],
  ["v10", "1283,898 1242,898 1242,967 1283,967"],
];
const woodMatrix = "0.52 0 0 0 0.3  0.48 0 0 0 0.15  0.34 0 0 0 0.05  0 0 0 0 1";
const Drawing = () => (
  <svg width={CW} height={CH} viewBox={`36 204 ${CW} ${CH}`}>
    <defs>
      <filter id="woodH" x="0" y="0" width="100%" height="100%" colorInterpolationFilters="sRGB">
        <feTurbulence type="fractalNoise" baseFrequency="0.006 0.09" numOctaves="4" seed="7" />
        <feColorMatrix values={woodMatrix} />
      </filter>
      <filter id="woodV" x="0" y="0" width="100%" height="100%" colorInterpolationFilters="sRGB">
        <feTurbulence type="fractalNoise" baseFrequency="0.1 0.008" numOctaves="4" seed="11" />
        <feColorMatrix values={woodMatrix} />
      </filter>
      <filter id="stone" x="0" y="0" width="100%" height="100%" colorInterpolationFilters="sRGB">
        <feTurbulence type="fractalNoise" baseFrequency="0.13" numOctaves="4" seed="4" />
        <feColorMatrix values="0.3 0 0 0 0.4  0.3 0 0 0 0.36  0.27 0 0 0 0.28  0 0 0 0 1" />
      </filter>
      <clipPath id="slab"><polygon points={slabPts} /></clipPath>
      {verticalZones.map(([id, pts]) => <clipPath id={id} key={id}><polygon points={pts} /></clipPath>)}
    </defs>
    <path d="M130.500 967V572.500H1536.500V967" fill="none" stroke="#b9cde6" />
    <g clipPath="url(#slab)"><rect x="170" y="595" width="1330" height="90" filter="url(#stone)" /></g>
    <g fill="#7a4a26">
      <path d="M448 612l6-6 4 1-6 7zM575 645l3-10 2 1-2 10zM481 665l2-8 3 1-1 8zM800 606l6-3 2 2-6 3zM1050 620l3-5 2 2-3 4z" />
    </g>
    <polygon points={slabPts} fill="none" stroke="#000" strokeWidth="1.500" />
    <rect x="224" y="668" width="1218" height="21" fill="#b83d7a" stroke="#000" strokeWidth="1.200" />
    <rect x="224" y="689" width="1218" height="278" filter="url(#woodH)" />
    {verticalZones.map(([id]) => <React.Fragment key={id}>{V(id)}</React.Fragment>)}
    <g fill="none" stroke="#000" strokeWidth="1.500">
      <path d="M224 689V967M1442 689V967" />
      <path d="M224 898H270M1397 898H1442M383 898H1283M424 898V967M1242 898V967" />
      <path d="M270 749H1397M272 752H1394M278 757H1389M288 768H1378" />
      <path d="M270 749V967M1397 749V967M273 752V967M1394 752V967M278 757V967M1389 757V967M288 768V967M1378 768V967" />
      <path d="M270 749L296 775M1397 749L1371 775" />
      <path d="M296 775H1371M296 775V967M1371 775V967" strokeWidth="2.200" />
      <path d="M296 775L368 847M1371 775L1298 847" />
      <path d="M368 847H1298" strokeWidth="2" />
      <path d="M372 852H1294" strokeWidth="2.500" />
      <path d="M383 862H1283" />
      <path d="M368 847V967M1298 847V967M383 862V967M1283 862V967M368 847L383 862M1298 847L1283 862" />
      <path d="M374.500 852V967M1291.500 852V967" strokeWidth="4" />
    </g>
    <path d={gridPath} fill="none" stroke="#3f4658" strokeOpacity=".14" strokeWidth="1" />
    <rect x="1484.500" y="674.500" width="13" height="13" fill="none" stroke="#f0f" strokeWidth="1.300" strokeDasharray="3 2" />
  </svg>
);

const leftIcons: (string | [number, number])[] = ["matGroup", "boardTall", "boardFlat", "boardFront", "curved", "frameH", "arrowsV", "arrowsH", [1, 6], "planeBoard", "arch", "wave", [2, 4], "roundBoard", [4, 4], "sphere", "pyramid", [2, 6], "door", "drawer", "partition"];
const rightIcons: (string | [number, number])[] = ["sheet", "docsNet", "xmlDoc", [3, 4], "matArrow", [3, 4], "screw", "screwAdd", "screwDel", [3, 4], "plateAdd", "plateTo", "plateDel", [3, 4], "bluePlus", "blueDel", [4, 4], "groove", "grooveTo", "grooveDel"];
const side = (items: (string | [number, number])[]) =>
  items.map((it, i) =>
    typeof it === "string"
      ? <SideBtn key={i}><Ico n={it} s={22} /></SideBtn>
      : <SideSep key={i} $m={it[0]} $b={it[1]} />
  );

const Logo = ({ s }: { s: number }) => (
  <Glyph $s={s} viewBox="0 0 24 24">{brandSwoosh("#fff")}</Glyph>
);
const taskSvg = {
  windows: <path d="M1 4l9-1.300V11H1zM11 2.500L23 1v10H11zM1 12h9v8.300L1 19zM11 12h12v11l-12-1.600z" fill="#fff" />,
  calc: <g><rect x="3" y="1" width="18" height="22" rx="2" fill="#9fc7e6" stroke="#6d95b8" /><path d="M6 3h12v6H6z" fill="#dfeaf4" stroke="#5a7a95" /><g fill="#4f7ea5">{[11, 14, 17, 20].flatMap((y) => [6, 9.500, 13, 16.500].map((x) => <rect key={`${x}-${y}`} x={x} y={y} width="2.400" height="2" />))}</g></g>,
  explorer: <g><path d="M1 5h8l2 2h12v15H1z" fill="#f5d266" stroke="#c9a845" /><path d="M4 3h6v4H4zM12 4h7v3h-7z" fill="#fff" /><path d="M6 15h12l2 7H4z" fill="#7cc3e8" /></g>,
  shield: <g><rect x="0" y="0" width="24" height="24" rx="4" fill="#17202c" /><path d="M12 3l8 3v6c0 5-4 8-8 10-4-2-8-5-8-10V6z" fill="#1e9fd8" /><path d="M8 16l7-9 1 6-4 2-2 3z" fill="#0b2233" /></g>,
  opera: <g><ellipse cx="12" cy="12" rx="11" ry="12" fill="#e8202c" /><ellipse cx="12" cy="12" rx="4.800" ry="9" fill="#5f6a75" /></g>,
  shieldX: <g><path d="M11 2l8 2v8c0 5-4 8-8 10-4-2-8-5-8-10V4z" fill="#1d7fd0" /><path d="M7 13l6-6-1 7z" fill="#fff" /><circle cx="18" cy="18" r="5" fill="#e66" /><path d="M16 16l4 4M20 16l-4 4" stroke="#fff" /></g>,
  nvidia: <g><rect x="1" y="1" width="22" height="22" rx="2" fill="#2c2f30" stroke="#7b8289" /><path d="M5 12c3-4 9-5 14-3v6c-5 2-11 1-14-3z" fill="#76b900" /><ellipse cx="12" cy="12" rx="3" ry="2" fill="#2c2f30" /></g>,
  speakerTray: <g><path d="M7 3c6 2 11 9 12 16-5-1-11-6-14-11z" fill="#222" stroke="#ddd" /><circle cx="7" cy="20" r="2.500" fill="#ddd" /><path d="M4 22h8" stroke="#ddd" /></g>,
  pdf: <g><rect x="2" y="1" width="20" height="22" rx="2" fill="#b30b00" /><path d="M6 19c4-3 6-9 5-13 0 5 3 9 8 9-4-1-9 0-13 4z" fill="none" stroke="#fff" strokeWidth="1.500" /></g>,
  usb: <g><path d="M2 13l12-6 6 2-12 6z" fill="#c2c6ca" /><path d="M14 7l4-3 3 2-1 3z" fill="#777" /><circle cx="16" cy="17" r="5" fill="#1f8d3a" stroke="#eee" /><path d="M14 17l2 2 3-4" stroke="#fff" fill="none" /></g>,
  flag: <g fill="#fff"><path d="M3 1h1.500v22H3z" /><path d="M5 2c5-1 7 3 16 1l-3 6 3 5c-8 2-11-2-16 0z" /></g>,
  signal: <g fill="#fff"><path d="M3 18h3v5H3zM8 14h3v9H8zM13 9h3v14h-3zM18 3h3v20h-3z" /></g>,
  volume: <g><path d="M7 8H2v8h5l7 7V1z" fill="#fff" /><path d="M18 8c1 3 1 5 0 8" stroke="#fff" fill="none" /></g>,
};
const T = ({ k, s }: { k: keyof typeof taskSvg; s: number }) => (
  <Glyph $s={s} viewBox="0 0 24 24">{taskSvg[k]}</Glyph>
);
const CloseX = styled.svg`
  width: 11px; height: 11px; display: block;
`;
const Cross = () => (
  <CloseX viewBox="0 0 11 11"><path d="M1 1l9 9M10 1l-9 9" stroke="#555" strokeWidth="1.800" /></CloseX>
);
const WinMark = ({ d, c = "#222", w = 16, sw = 1.500 }: { d: string; c?: string; w?: number; sw?: number }) => (
  <Glyph $s={w} viewBox="0 0 16 16"><path d={d} fill="none" stroke={c} strokeWidth={sw} /></Glyph>
);
const TabLogo = styled.div`
  width: 40px; height: 40px; background: #1e88e5; border-radius: 2px; display: flex; align-items: center; justify-content: center;
`;

export default function App() {
  return (
    <Page>
      <Global />
      <TitleBar>
        <AppLogo><Logo s={18} /></AppLogo>
        <TitleText>БАЗИС-Мебельщик 2021.9.2 - [Bradford]</TitleText>
        <WinButtons>
          <WinBtn $w={36}><WinMark d="M1 14h14" sw={2} /></WinBtn>
          <WinBtn $w={36}><WinMark d="M4 3V1h11v10h-3M1 4h11v11H1zM1 6h11" w={17} /></WinBtn>
          <WinBtn $w={57} $close><WinMark d="M3 3l10 10M13 3L3 13" c="#fff" w={13} sw={2.500} /></WinBtn>
        </WinButtons>
      </TitleBar>

      <MenuBar>
        {["Файл", "Правка", "Группировка", "Выделение", "Удалить", "Изделие", "Настройка", "Инструменты", "Скрипты", "Окно", "Справка"].map((m) => <MenuItem key={m}>{m}</MenuItem>)}
        <MenuRight>
          <MenuSep $r={16} />
          <MenuRightItem $w={78}>Language</MenuRightItem>
          <MenuSep $r={16} />
          <MenuRightItem $w={111}>По умолчанию</MenuRightItem>
          <Caret $w={8} />
          <SmallGlyph $w={15} />
          <SmallGlyph $w={15}><WinMark d="M2 11h6" sw={2} w={11} c="#111" /></SmallGlyph>
          <SmallGlyph $w={22}><WinMark d="M4 3h7v6h-2M2 5h7v6H2zM2 6h7" w={13} c="#111" sw={1.300} /></SmallGlyph>
          <SmallGlyph $w={23}><WinMark d="M3 3l8 8M11 3l-8 8" w={13} c="#111" sw={2} /></SmallGlyph>
          <SmallGlyph $w={4} />
        </MenuRight>
      </MenuBar>

      <ToolRow $h={38}>
        <Bar $w={222}>
          <Handle />
          <B n="doc" /><Caret $w={10} />
          <B n="folder" /><Caret $w={16} />
          <B n="save" /><B n="print" /><Sep /><B n="undo" /><B n="redo" />
        </Bar>
        <Bar $w={314}>
          <Handle $w={11} />
          <B n="axes" /><B n="dots" on /><B n="snap" on /><B n="magnet" on /><B n="ptline" on /><B n="ptlineadd" />
          <B n="ruler" w={28} /><Caret $w={11} />
          <B n="layerCursor" on /><B n="blueCursor" on /><B n="greenBox" on />
        </Bar>
        <Bar $w={594}>
          <Handle $w={11} />
          <FieldLabel $w={22} $ml={5} $u>Ш</FieldLabel>
          <Combo $w={65} $off>10<Chevron c="#c4c6c9" /></Combo>
          <FieldLabel $w={31} $ml={5} $u>ШС</FieldLabel>
          <Combo $w={65}>1<Chevron /></Combo>
          <Sep $ml={2} $mr={5} />
          <B n="layers" w={33} />
          <Combo $w={180}>
            <ComboSlot $w={24}><Ico n="bulbS" s={18} /></ComboSlot>
            <ComboSlot $w={22}><Ico n="lock" s={18} /></ComboSlot>
            <Swatch />
            <LayerName>Модель</LayerName>
            <Chevron />
          </Combo>
          <FieldLabel $w={88} $ml={6}>Цвет линии</FieldLabel>
          <LineBox />
          <Caret $w={8} />
        </Bar>
        <Bar $w={290}>
          <Handle $w={11} />
          <B n="folders" /><Sep $ml={2} $mr={4} />
          <B n="scissors" /><B n="wardrobe" /><B n="screwUp" /><B n="box" /><B n="sigma" /><B n="recycle" /><B n="eye" />
          <Sep $ml={4} $mr={4} /><B n="yLogo" />
        </Bar>
        <Bar $w={43} $ml={11}><Handle /></Bar>
        <Bar $w={129} $ml={10}>
          <Handle />
          <B n="zoomFit" /><B n="zoomAll" /><B n="magnify" /><B n="brush" />
        </Bar>
      </ToolRow>

      <ToolRowPlain $h={34}>
        <BarBoxed $w={557} $ml={8}>
          <Handle />
          <B n="cLeft" /><Sep $ml={0} $mr={0} />
          <B n="cFront" on /><B n="cTop" /><B n="cDiag" /><B n="cWire" /><B n="cGrey" />
          <Sep $ml={2} $mr={4} /><B n="rotate" /><Sep $ml={4} $mr={4} />
          <B n="woodGrey" /><B n="wood" on /><B n="cWhite" /><B n="cGW" /><B n="cWire" /><B n="viewPanel" />
          <Sep $ml={2} $mr={4} />
          <B n="camera" /><B n="vray" /><B n="bulb" /><Caret $w={10} /><B n="materials" /><Caret $w={16} />
        </BarBoxed>
      </ToolRowPlain>

      <PanelRow>
        <Panel>
          <Handle $w={10} />
          <PanelBody>
            <PanelStrip>
              <B n="plane" w={29} s={24} />
              <Sep $ml={13} $mr={5} />
              <B n="line" /><B n="angle" /><B n="circle" /><B n="hex" /><B n="dim" />
            </PanelStrip>
            <PanelTabs>
              <PanelTab $w={79} $on>Строить</PanelTab>
              <PanelTab $w={74}>Править</PanelTab>
              <PanelTab $w={90}>Операции</PanelTab>
            </PanelTabs>
          </PanelBody>
        </Panel>
      </PanelRow>

      <Workspace>
        <SideColumn $w={36} $pt={0} $h={523}>
          <SideBar>
            <SideHandle />
            <Gap $h={5} />
            {side(leftIcons)}
          </SideBar>
        </SideColumn>
        <Canvas><Drawing /></Canvas>
        <SideColumn $w={35} $pt={56} $h={472} $right>
          <SideBar>
            <SideHandle />
            <Gap $h={3} />
            {side(rightIcons)}
          </SideBar>
        </SideColumn>
      </Workspace>

      <TabsRow>
        <DocTab $w={107} $on $pl={8}>Bradford<Cross /></DocTab>
        <DocTab $w={75} $pl={2}>line 2<Cross /></DocTab>
        <DocTab $w={100} $pl={5}>Newport<Cross /></DocTab>
        <TabsRight>
          <SmallGlyph $w={21}><WinMark d="M11 2L5 8l6 6z" c="#111" w={12} /></SmallGlyph>
          <SmallGlyph $w={21}><WinMark d="M5 2l6 6-6 6z" c="#111" w={12} /></SmallGlyph>
          <TabsVSep />
          <SmallGlyph $w={14}><WinMark d="M3 8l5-5 5 5M3 13l5-5 5 5" c="#111" w={11} sw={2} /></SmallGlyph>
        </TabsRight>
      </TabsRow>

      <StatusRow>
        <StatusBar $w={526} $ml={26}>
          <Handle />
          <B n="matGroup" />
          <SmallGlyph $w={32}><Ico n="orange" s={18} /></SmallGlyph>
          <StatusText>МДФ ШЛИФОВАННЫЙ 2500Х2070Х16 (Артикул 82014192)</StatusText>
        </StatusBar>
        <StatusBar $w={263} $ml={729}>
          <Handle $w={12} />
          <B n="help" s={20} />
        </StatusBar>
        <StatusBar $w={140}>
          <SmallGlyph $w={140} />
        </StatusBar>
        <StatusBar $w={212}>
          <Handle $w={6} />
          <B n="tree" /><B n="notepad" /><B n="orangeGrid" /><B n="listClock" /><B n="zoomDoc" /><B n="materials" /><B n="book" />
        </StatusBar>
      </StatusRow>

      <Taskbar>
        <TaskSlot $w={58}><T k="windows" s={34} /></TaskSlot>
        <TaskSlot $w={69}><T k="calc" s={38} /></TaskSlot>
        <TaskSlot $w={69}><T k="explorer" s={40} /></TaskSlot>
        <TaskSlot $w={69}><T k="shield" s={40} /></TaskSlot>
        <TaskSlot $w={69} $state="open"><T k="opera" s={40} /></TaskSlot>
        <TaskSlot $w={69} $state="active"><TabLogo><Logo s={34} /></TabLogo></TaskSlot>
        <Tray>
          <TraySlot><T k="shieldX" s={22} /></TraySlot>
          <TraySlot><T k="nvidia" s={22} /></TraySlot>
          <TraySlot><T k="speakerTray" s={22} /></TraySlot>
          <TraySlot><T k="pdf" s={22} /></TraySlot>
          <TraySlot><T k="usb" s={22} /></TraySlot>
          <TraySlot><T k="flag" s={22} /></TraySlot>
          <TraySlot><T k="signal" s={20} /></TraySlot>
          <TraySlot><T k="volume" s={22} /></TraySlot>
          <Lang>РУС</Lang>
          <Clock>16:13<br />01.06.2022</Clock>
        </Tray>
        <Watermark $x={215} $op={0.28}>(C) Sergey Ablogin | IL-78M RA-78824 | photo ID89547</Watermark>
        <PlaneMark>
          <PlaneShape viewBox="0 0 56 14"><path d="M0 4l30 4 18-3 6-3-2 6-20 3-14-1z" fill="#7c8894" /></PlaneShape>
          RussianPlanes.NET
        </PlaneMark>
      </Taskbar>
    </Page>
  );
}
